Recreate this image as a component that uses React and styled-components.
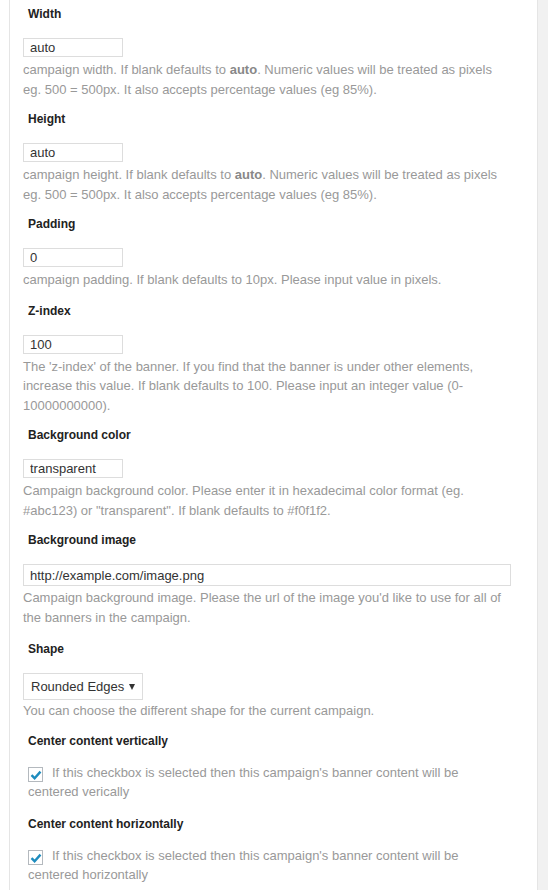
import React from "react";
import styled, { createGlobalStyle } from "styled-components";

const Global = createGlobalStyle`
  html, body { margin: 0; padding: 0; background: #fff; }
  body { font-family: "Liberation Sans", Arial, sans-serif; }
  * { box-sizing: border-box; }
`;

const Page = styled.div`
  display: flex;
  min-height: 890px;
  background: #fff;
`;

const Panel = styled.div`
  margin-left: 9px;
  width: 529px;
  border-left: 1px solid #e5e5e5;
  border-right: 1px solid #e5e5e5;
  padding: 4px 0 0 13px;
  display: flex;
  flex-direction: column;
  gap: 10px;
`;

const Side = styled.div`
  flex: 1;
  background: #f1f1f1;
`;

const Field = styled.div`
  display: flex;
  flex-direction: column;
  margin-top: ${(p) => p.$shift || 0}px;
`;

const Label = styled.div`
  font-size: 12px;
  font-weight: bold;
  line-height: 20px;
  color: #222;
  padding-left: 5px;
`;

const Control = styled.div`
  margin-top: 14px;
  min-height: ${(p) => p.$h || 22}px;
  display: flex;
  align-items: flex-start;
`;

const TextInput = styled.input`
  width: ${(p) => (p.$wide ? "488px" : "100px")};
  height: ${(p) => (p.$wide ? "22px" : "19px")};
  border: 1px solid #ddd;
  padding: 0 6px;
  margin: 0;
  font-family: "Liberation Sans", Arial, sans-serif;
  font-size: 13px;
  color: #333;
  background: #fff;
  outline: none;
  border-radius: 0;
`;

const Select = styled.div`
  width: 120px;
  height: 27px;
  border: 1px solid #ddd;
  display: flex;
  align-items: center;
  justify-content: space-between;
  padding: 0 6px 0 7px;
  font-size: 13px;
  color: #333;
  background: #fff;
`;

const Arrow = styled.span`
  width: 0;
  height: 0;
  border-left: 3px solid transparent;
  border-right: 3px solid transparent;
  border-top: 6px solid #333;
  margin-right: 1px;
`;

const Desc = styled.div`
  font-size: 13px;
  line-height: 19.5px;
  color: #999;
  padding-right: 27px;
  b { font-weight: bold; color: #888; }
`;

const CheckRow = styled.label`
  display: block;
  margin-top: 12px;
  padding-left: 5px;
  padding-right: 40px;
  font-size: 13px;
  line-height: 19.5px;
  color: #999;
`;

const Box = styled.span`
  display: inline-block;
  width: 15px;
  height: 15px;
  border: 1px solid #b4b9be;
  background: #fff;
  vertical-align: -5px;
  margin-right: 9px;
  position: relative;
  svg { position: absolute; left: 1px; top: 1px; }
`;

const Check = () => (
  <Box>
    <svg width="12" height="12" viewBox="0 0 12 12">
      <path d="M1.5 6.2 L4.6 9.2 L10.5 2.6" fill="none" stroke="#1e8cbe" strokeWidth="2.4" />
    </svg>
  </Box>
);

export default function App() {
  return (
    <>
      <Global />
      <Page>
        <Panel>
          <Field>
            <Label>Width</Label>
            <Control><TextInput defaultValue="auto" /></Control>
            <Desc>campaign width. If blank defaults to <b>auto</b>. Numeric values will be treated as pixels eg. 500 = 500px. It also accepts percentage values (eg 85%).</Desc>
          </Field>
          <Field>
            <Label>Height</Label>
            <Control><TextInput defaultValue="auto" /></Control>
            <Desc>campaign height. If blank defaults to <b>auto</b>. Numeric values will be treated as pixels eg. 500 = 500px. It also accepts percentage values (eg 85%).</Desc>
          </Field>
          <Field>
            <Label>Padding</Label>
            <Control><TextInput defaultValue="0" /></Control>
            <Desc>campaign padding. If blank defaults to 10px. Please input value in pixels.</Desc>
          </Field>
          <Field $shift={1}>
            <Label>Z-index</Label>
            <Control><TextInput defaultValue="100" /></Control>
            <Desc>The 'z-index' of the banner. If you find that the banner is under other elements, increase this value. If blank defaults to 100. Please input an integer value (0-10000000000).</Desc>
          </Field>
          <Field>
            <Label>Background color</Label>
            <Control><TextInput defaultValue="transparent" /></Control>
            <Desc>Campaign background color. Please enter it in hexadecimal color format (eg. #abc123) or "transparent". If blank defaults to #f0f1f2.</Desc>
          </Field>
          <Field>
            <Label>Background image</Label>
            <Control $h={24}><TextInput $wide defaultValue="http://example.com/image.png" /></Control>
            <Desc>Campaign background image. Please the url of the image you'd like to use for all of the banners in the campaign.</Desc>
          </Field>
          <Field $shift={2}>
            <Label>Shape</Label>
            <Control $h={28}><Select>Rounded Edges <Arrow /></Select></Control>
            <Desc>You can choose the different shape for the current campaign.</Desc>
          </Field>
          <Field>
            <Label>Center content vertically</Label>
            <CheckRow><Check />If this checkbox is selected then this campaign's banner content will be centered verically</CheckRow>
          </Field>
          <Field $shift={2}>
            <Label>Center content horizontally</Label>
            <CheckRow><Check />If this checkbox is selected then this campaign's banner content will be centered horizontally</CheckRow>
          </Field>
        </Panel>
        <Side />
      </Page>
    </>
  );
}
